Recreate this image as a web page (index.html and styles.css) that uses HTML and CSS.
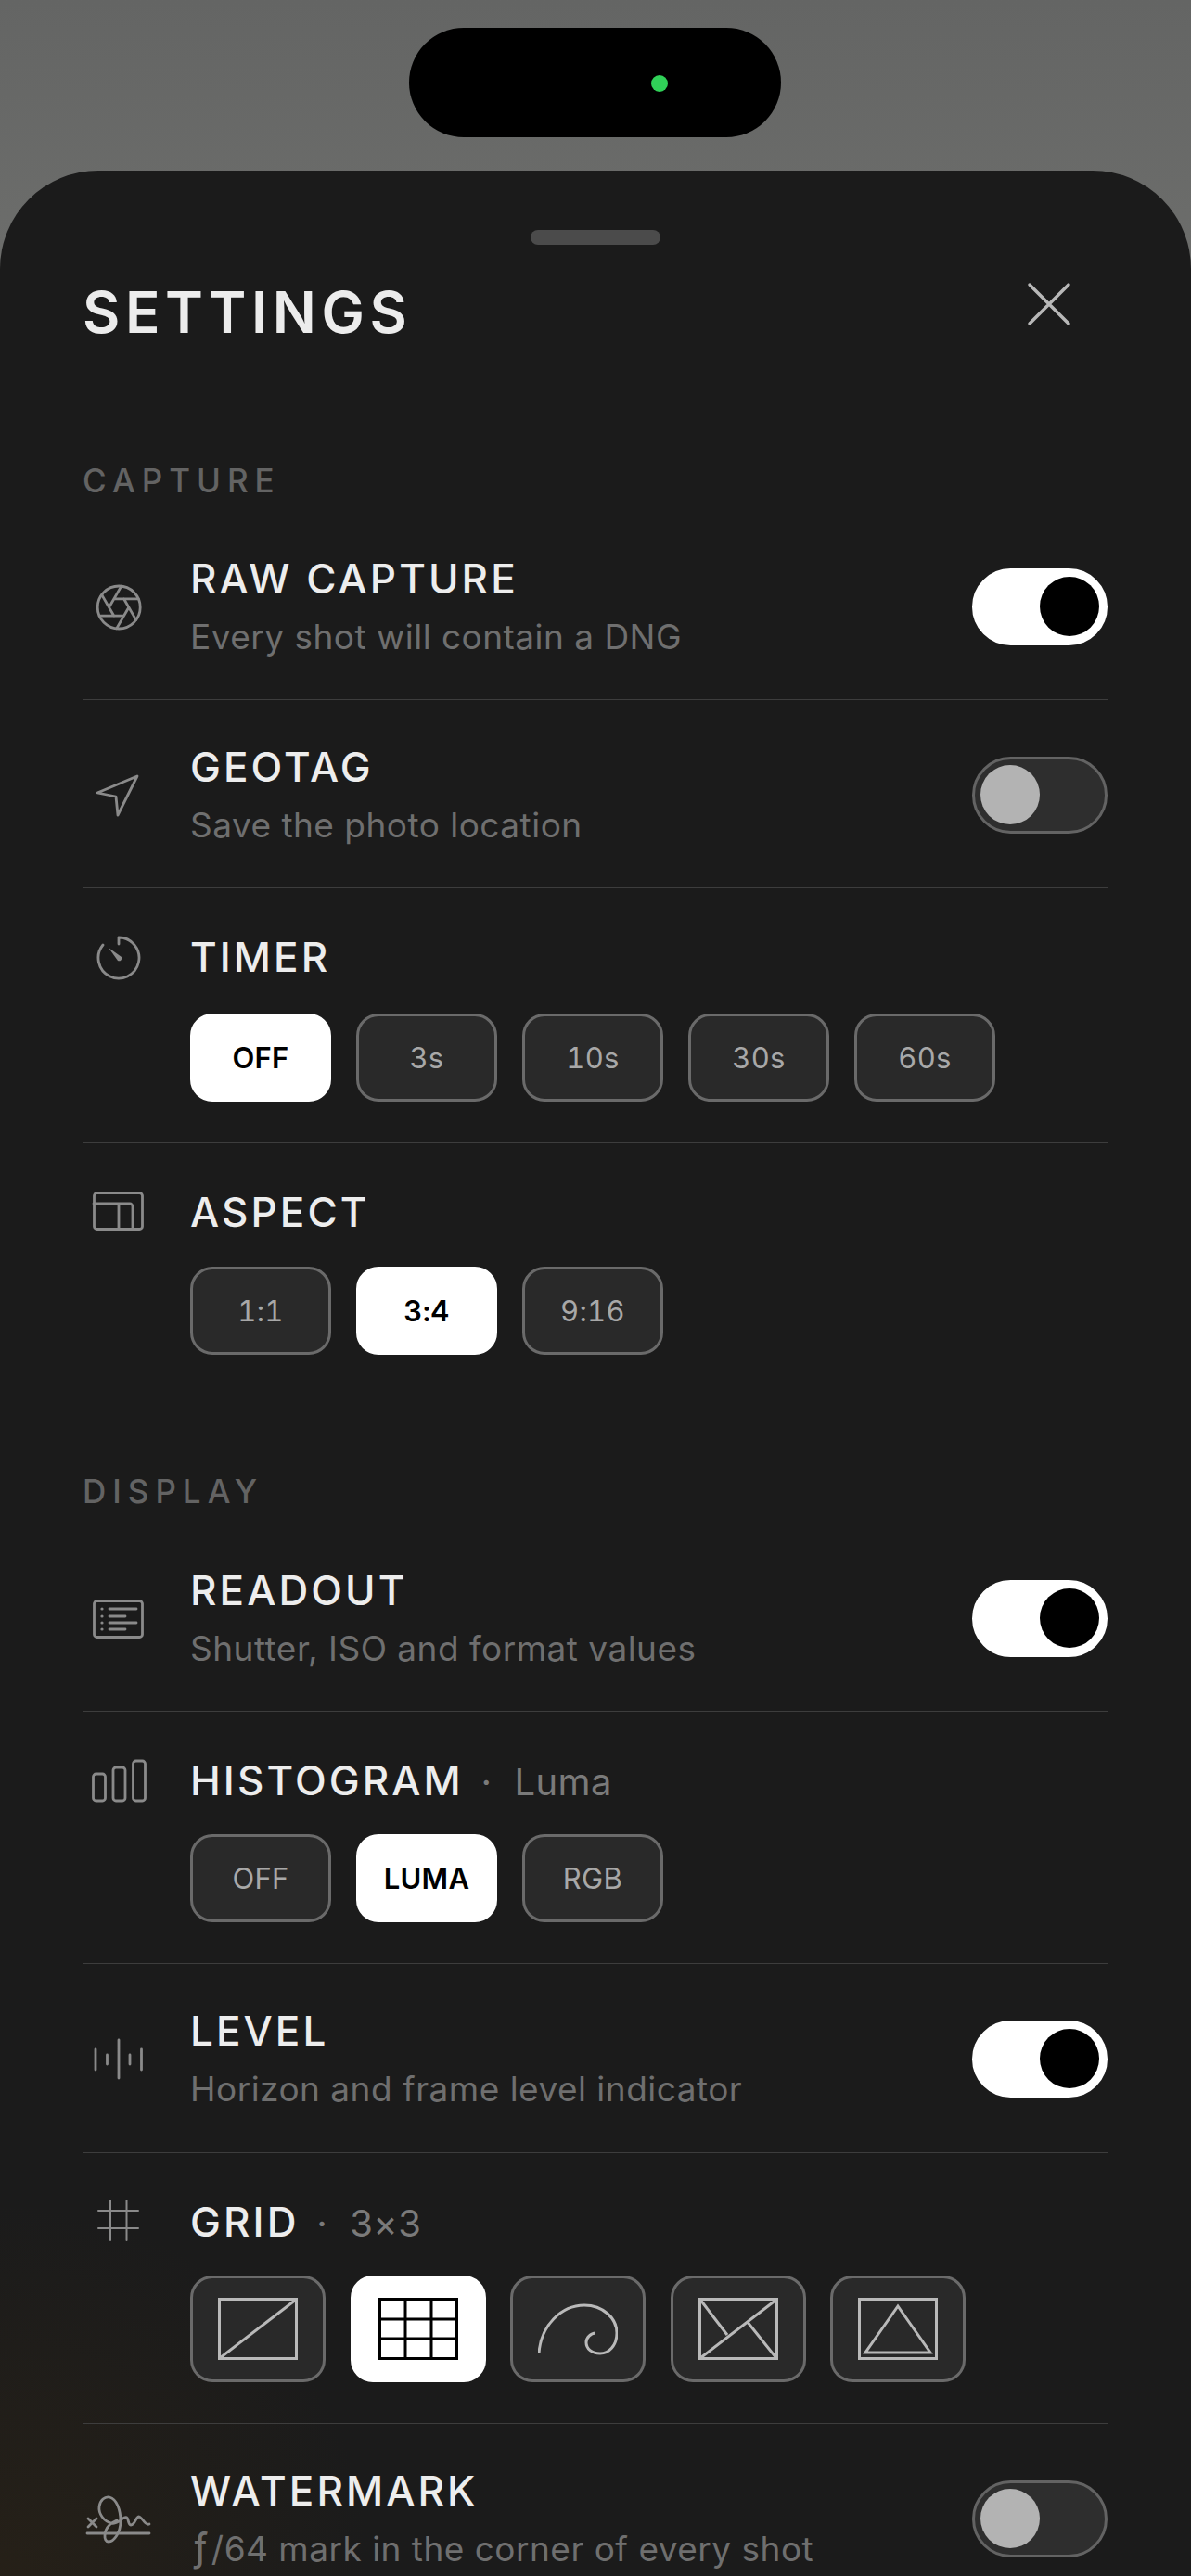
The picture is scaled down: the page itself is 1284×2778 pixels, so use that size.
FILE: index.html
```html
<!DOCTYPE html>
<html lang="en">
<head>
  <meta charset="UTF-8" />
  <meta name="viewport" content="width=device-width, initial-scale=1.0" />
  <title>Settings</title>
  <link rel="stylesheet" href="styles.css">
</head>
<body>
  <div class="island"><span class="island-dot"></span></div>

  <main class="sheet">
    <div class="handle"></div>

    <header class="sheet-head">
      <h1>SETTINGS</h1>
      <svg class="close" viewBox="0 0 44 42"><path d="M1 0 L43 42 M43 0 L1 42" /></svg>
    </header>

    <section>
      <h2 class="section-label">CAPTURE</h2>

      <div class="row row-toggle">
        <svg class="ico" viewBox="0 0 74 60">
          <g transform="translate(9.6 2.4) scale(2.3)">
            <circle cx="12" cy="12" r="10" />
            <path d="M14.31 8 L20.05 17.94 M9.69 8 H21.17 M7.38 12 L13.12 2.06 M9.69 16 L3.95 6.06 M14.31 16 H2.83 M16.62 12 L10.88 21.94" />
          </g>
        </svg>
        <div class="row-text">
          <div class="row-title">RAW CAPTURE</div>
          <div class="row-sub">Every shot will contain a DNG</div>
        </div>
        <div class="toggle on"><span class="knob"></span></div>
      </div>

      <div class="row row-toggle">
        <svg class="ico" viewBox="0 0 74 60"><path d="M57 9 L14 27 L34 31 L36 51 Z" /></svg>
        <div class="row-text">
          <div class="row-title">GEOTAG</div>
          <div class="row-sub">Save the photo location</div>
        </div>
        <div class="toggle"><span class="knob"></span></div>
      </div>

      <div class="row row-timer">
        <svg class="ico" viewBox="0 0 74 60">
          <path d="M37 17 V10 A22 22 0 1 1 20 18" />
          <path class="ico-fill" d="M26 21 L40 31 A3 3 0 0 1 36 35 Z" />
        </svg>
        <div class="row-text">
          <div class="row-title">TIMER</div>
          <div class="segs">
            <div class="seg active">OFF</div>
            <div class="seg">3s</div>
            <div class="seg">10s</div>
            <div class="seg">30s</div>
            <div class="seg">60s</div>
          </div>
        </div>
      </div>

      <div class="row row-aspect">
        <svg class="ico" viewBox="0 0 74 60">
          <rect x="10.5" y="10.5" width="52" height="39" rx="3" />
          <path d="M10 22 H49 A3 3 0 0 1 52 25 V50 M37 22 V50" />
        </svg>
        <div class="row-text">
          <div class="row-title">ASPECT</div>
          <div class="segs">
            <div class="seg">1:1</div>
            <div class="seg active">3:4</div>
            <div class="seg">9:16</div>
          </div>
        </div>
      </div>
    </section>

    <section class="section-display">
      <h2 class="section-label">DISPLAY</h2>

      <div class="row row-toggle">
        <svg class="ico" viewBox="0 0 74 60">
          <rect x="10.5" y="10.5" width="52" height="39" rx="3" />
          <path d="M27 19 H56 M27 27 H44 M27 34 H56 M27 41 H44" />
          <circle class="ico-fill" cx="19" cy="19" r="1.6" />
          <circle class="ico-fill" cx="19" cy="27" r="1.6" />
          <circle class="ico-fill" cx="19" cy="34" r="1.6" />
          <circle class="ico-fill" cx="19" cy="41" r="1.6" />
        </svg>
        <div class="row-text">
          <div class="row-title">READOUT</div>
          <div class="row-sub">Shutter, ISO and format values</div>
        </div>
        <div class="toggle on"><span class="knob"></span></div>
      </div>

      <div class="row">
        <svg class="ico" viewBox="0 0 74 60">
          <rect x="9.5" y="24" width="13" height="29" rx="3" />
          <rect x="31" y="17" width="13" height="36" rx="3" />
          <rect x="52.5" y="10" width="13" height="43" rx="3" />
        </svg>
        <div class="row-text">
          <div class="row-title">HISTOGRAM <span class="row-value"><i>·</i>Luma</span></div>
          <div class="segs">
            <div class="seg">OFF</div>
            <div class="seg active">LUMA</div>
            <div class="seg">RGB</div>
          </div>
        </div>
      </div>

      <div class="row row-toggle row-level">
        <svg class="ico" viewBox="0 0 74 60">
          <path d="M12 19 V41 M24.5 25 V35 M37 9 V50 M49 25 V35 M61.5 19 V41" />
        </svg>
        <div class="row-text">
          <div class="row-title">LEVEL</div>
          <div class="row-sub">Horizon and frame level indicator</div>
        </div>
        <div class="toggle on"><span class="knob"></span></div>
      </div>

      <div class="row">
        <svg class="ico thin" viewBox="0 0 74 60">
          <path d="M15 19 H58 M15 38 H58 M28 8 V51 M45.5 8 V51" />
        </svg>
        <div class="row-text">
          <div class="row-title">GRID <span class="row-value"><i>·</i>3×3</span></div>
          <div class="segs">
            <div class="seg seg-icon">
              <svg viewBox="0 0 86 67"><rect x="1.5" y="1.5" width="83" height="64" /><path d="M2 65 L84 2" /></svg>
            </div>
            <div class="seg seg-icon active">
              <svg viewBox="0 0 86 67"><rect x="1.5" y="1.5" width="83" height="64" /><path d="M29 2 V65 M57 2 V65 M2 23 H84 M2 44 H84" /></svg>
            </div>
            <div class="seg seg-icon">
              <svg viewBox="0 0 86 67"><path d="M1 60 C3 30 25 8 50 8 C70 8 85 22 85 38 C85 52 76 60 67 60 C58 60 52 55 52 48 C52 43 57 38 62 38" /></svg>
            </div>
            <div class="seg seg-icon">
              <svg viewBox="0 0 86 67"><rect x="1.5" y="1.5" width="83" height="64" /><path d="M2 65 L84 2 M2 2 L31 40 M84 65 L52 25" /></svg>
            </div>
            <div class="seg seg-icon">
              <svg viewBox="0 0 86 67"><rect x="1.5" y="1.5" width="83" height="64" /><path d="M43 9 L78 59 H8 Z" /></svg>
            </div>
          </div>
        </div>
      </div>

      <div class="row row-toggle">
        <svg class="ico" viewBox="0 0 74 60">
          <g transform="translate(-11 -26)">
            <path d="M15 55 L24 64 M24 55 L15 64 M14 71 H81" />
            <path d="M81 61 C76 63 74 54 70 53 C66 53 66 62 61 62 C57 62 60 52 54 54 C50 56 46 62 40 60 C32 58 26 50 27 42 C28 35 33 31 38 32 C46 34 50 46 50 58 C50 70 43 80 37 80 C31 80 32 68 38 62 C40 60 44 58 46 57" />
          </g>
        </svg>
        <div class="row-text">
          <div class="row-title">WATERMARK</div>
          <div class="row-sub"><span class="fnum">ƒ</span>/64 mark in the corner of every shot</div>
        </div>
        <div class="toggle"><span class="knob"></span></div>
      </div>
    </section>
  </main>
</body>
</html>
```

FILE: styles.css
```css
* {
  box-sizing: border-box;
}

html, body {
  height: 2778px;
}

body {
  margin: 0;
  padding-top: 184px;
  overflow: hidden;
  font-family: 'Inter', 'Roboto', sans-serif;
  background: linear-gradient(180deg, #646564 0, #6d6e6c 300px);
}

.island {
  position: absolute;
  top: 30px;
  left: 441px;
  width: 401px;
  height: 118px;
  border-radius: 59px;
  background: #000;
}
.island-dot {
  position: absolute;
  top: 51px;
  left: 261px;
  width: 18px;
  height: 18px;
  border-radius: 50%;
  background: #30d158;
}

.sheet {
  height: 2594px;
  padding: 64px 90px 0 89px;
  border-radius: 106px 106px 0 0;
  background:
    radial-gradient(circle 400px at 0 100%, rgba(58, 42, 18, 0.35), rgba(58, 42, 18, 0)),
    #1b1b1b;
}

.handle {
  width: 140px;
  height: 16px;
  margin: 0 auto;
  border-radius: 8px;
  background: #4b4b4b;
}

.sheet-head {
  display: flex;
  justify-content: space-between;
  align-items: flex-start;
  margin-top: 33px;
}
h1 {
  margin: 0;
  font-size: 62px;
  line-height: 80px;
  font-weight: 600;
  letter-spacing: 0.09em;
  color: #ececec;
}
.close {
  width: 44px;
  height: 42px;
  margin: 10px 41px 0 0;
  overflow: visible;
  fill: none;
  stroke: #b8b8b8;
  stroke-width: 3.5;
  stroke-linecap: round;
}

.section-label {
  margin: 119px 0 12px;
  font-size: 35px;
  line-height: 44px;
  font-weight: 500;
  letter-spacing: 0.2em;
  color: #636363;
}
.section-display .section-label {
  margin: 81px 0 13px;
}

.row {
  display: flex;
  align-items: flex-start;
  gap: 40px;
  padding: 42px 0 44px;
  border-bottom: 1px solid #3d3d3d;
}
.row:last-child {
  border-bottom: none;
}
.row-toggle {
  align-items: center;
  padding: 39px 0 37px;
}
.row-level {
  padding-bottom: 38px;
}

.ico {
  flex: none;
  width: 74px;
  height: 60px;
  margin: 1px 0 0 2px;
  overflow: visible;
  fill: none;
  stroke: #8a8a8a;
  stroke-width: 2.8;
  stroke-linecap: round;
  stroke-linejoin: round;
}
.row-toggle .ico {
  margin-top: 1px;
}
.ico .ico-fill {
  fill: #8a8a8a;
  stroke: none;
}
.ico g circle,
.ico g path {
  vector-effect: non-scaling-stroke;
}
.ico.thin {
  stroke-width: 2;
}

.row-text {
  flex: 1;
  min-width: 0;
  padding-top: 2px;
}
.row-toggle .row-text {
  padding-top: 3px;
}
.row-title {
  font-size: 44px;
  line-height: 61px;
  font-weight: 500;
  letter-spacing: 0.07em;
  color: #ededed;
}
.row-value {
  font-size: 40px;
  line-height: 1;
  font-weight: 400;
  letter-spacing: 0.01em;
  color: #7a7a7a;
}
.row-value i {
  margin: 0 24px 0 4px;
  font-style: normal;
}
.row-sub {
  margin-top: 1px;
  font-size: 37px;
  line-height: 61px;
  letter-spacing: 0.013em;
  color: #6f6f6f;
}
.fnum {
  padding-left: 3px;
  margin-right: 3px;
  font-size: 42px;
  line-height: 1;
}

.toggle {
  flex: none;
  display: flex;
  align-items: center;
  width: 146px;
  height: 83px;
  padding: 0 6px;
  border: 3px solid #636363;
  border-radius: 42px;
  background: #2e2e2e;
}
.knob {
  width: 64px;
  height: 64px;
  border-radius: 50%;
  background: #b3b3b3;
}
.toggle.on {
  justify-content: flex-end;
  border-color: #fff;
  background: #fff;
}
.toggle.on .knob {
  background: #000;
}

.segs {
  display: flex;
  gap: 27px;
  margin-top: 27px;
}
.row-timer .segs {
  margin-top: 30px;
}
.row-aspect .segs {
  margin-top: 28px;
}
.seg {
  display: flex;
  justify-content: center;
  align-items: center;
  width: 152px;
  height: 95px;
  border: 3px solid #6a6a6a;
  border-radius: 24px;
  background: #292929;
  font-size: 31px;
  font-variant-numeric: tabular-nums;
  letter-spacing: 0.01em;
  color: #a8a8a8;
}
.seg.active {
  border-color: #fff;
  background: #fff;
  font-weight: 600;
  color: #000;
}
.seg-icon {
  width: 146px;
  height: 115px;
}
.seg-icon + .seg-icon {
  margin-left: -0.5px;
}
.seg-icon svg {
  width: 86px;
  height: 67px;
  fill: none;
  stroke: #b9b9b9;
  stroke-width: 3;
}
.seg-icon.active svg {
  stroke: #000;
}
```
